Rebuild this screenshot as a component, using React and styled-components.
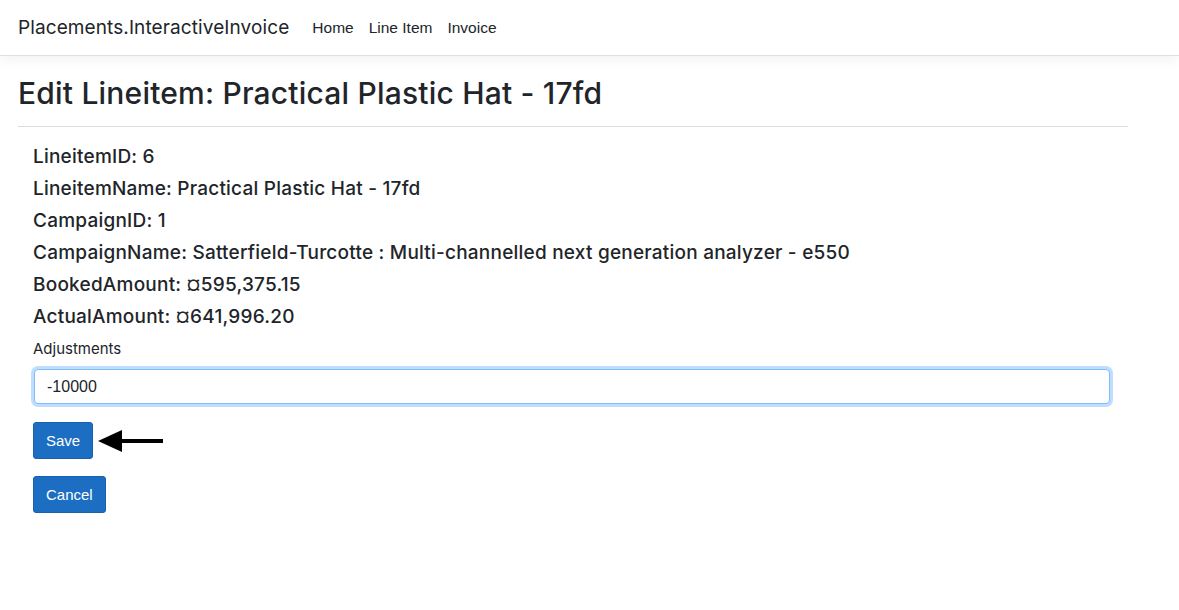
import React from 'react'
import styled, { createGlobalStyle } from 'styled-components';

const GlobalStyle = createGlobalStyle`
  html, body {
    margin: 0;
    padding: 0;
    background: #fff;
    color: #212529;
    font-family: Inter, "Liberation Sans", sans-serif;
  }
  * { box-sizing: border-box; }
`

const NavBar = styled.nav`
  height: 56px;
  display: flex;
  align-items: center;
  padding: 0 18px;
  border-bottom: 1px solid #e0e0e0;
  box-shadow: 0 4px 12px rgba(0, 0, 0, 0.05);
`

const Brand = styled.a`
  font-size: 19px;
  color: #212529;
  text-decoration: none;
  margin-right: 23px;
  letter-spacing: 0.1px;
`

const NavLink = styled.a`
  font-family: "Liberation Sans", Arial, sans-serif;
  font-size: 15.5px;
  color: #212529;
  text-decoration: none;
  margin-right: 15px;
`

const Page = styled.main`
  padding: 19px 51px 0 18px;
`

const Title = styled.h1`
  margin: 0;
  font-size: 30px;
  font-weight: 500;
  line-height: 36px;
  letter-spacing: 0.2px;
`

const Rule = styled.hr`
  margin: 15px 0 14px;
  border: 0;
  border-top: 1px solid #dcdcdc;
`

const Body = styled.div`
  padding: 0 18px 0 15px;
`

const Field = styled.div`
  font-size: 19px;
  font-weight: 500;
  line-height: 32px;
  letter-spacing: 0.22px;
`

const Label = styled.label`
  display: block;
  font-size: 15px;
  margin: 6px 0 11px;
`

const Input = styled.input`
  display: block;
  width: calc(100% - 1px);
  height: 35px;
  margin: 0 0 18px 1px;
  padding: 0 12px;
  font-family: "Liberation Sans", Arial, sans-serif;
  font-size: 16px;
  color: #212529;
  border: 1px solid #80bdff;
  border-radius: 4px;
  box-shadow: 0 0 0 3px rgba(0, 123, 255, 0.25);
  outline: none;
`

const ActionRow = styled.div`
  display: flex;
  align-items: center;
  gap: 5px;
  margin-bottom: 17px;
`

const Button = styled.button`
  height: 37px;
  padding: 0 12px;
  font-family: "Liberation Sans", Arial, sans-serif;
  font-size: 15px;
  color: #fff;
  background: #1b6ec2;
  border: 1px solid #1861ac;
  border-radius: 3px;
`

function Arrow() {
  return (
    <svg width="66" height="26" viewBox="0 0 66 26">
      <path d="M0 13 L24 2 L24 24 Z" fill="#000" />
      <rect x="22" y="11" width="43" height="4" fill="#000" />
    </svg>
  )
}

export default function App() {
  return (
    <>
      <GlobalStyle />
      <NavBar>
        <Brand href="#">Placements.InteractiveInvoice</Brand>
        <NavLink href="#">Home</NavLink>
        <NavLink href="#">Line Item</NavLink>
        <NavLink href="#">Invoice</NavLink>
      </NavBar>
      <Page>
        <Title>Edit Lineitem: Practical Plastic Hat - 17fd</Title>
        <Rule />
        <Body>
          <Field>LineitemID: 6</Field>
          <Field>LineitemName: Practical Plastic Hat - 17fd</Field>
          <Field>CampaignID: 1</Field>
          <Field>CampaignName: Satterfield-Turcotte : Multi-channelled next generation analyzer - e550</Field>
          <Field>BookedAmount: ¤595,375.15</Field>
          <Field>ActualAmount: ¤641,996.20</Field>
          <Label>Adjustments</Label>
          <Input defaultValue="-10000" />
          <ActionRow>
            <Button>Save</Button>
            <Arrow />
          </ActionRow>
          <ActionRow>
            <Button>Cancel</Button>
          </ActionRow>
        </Body>
      </Page>
    </>
  )
}
